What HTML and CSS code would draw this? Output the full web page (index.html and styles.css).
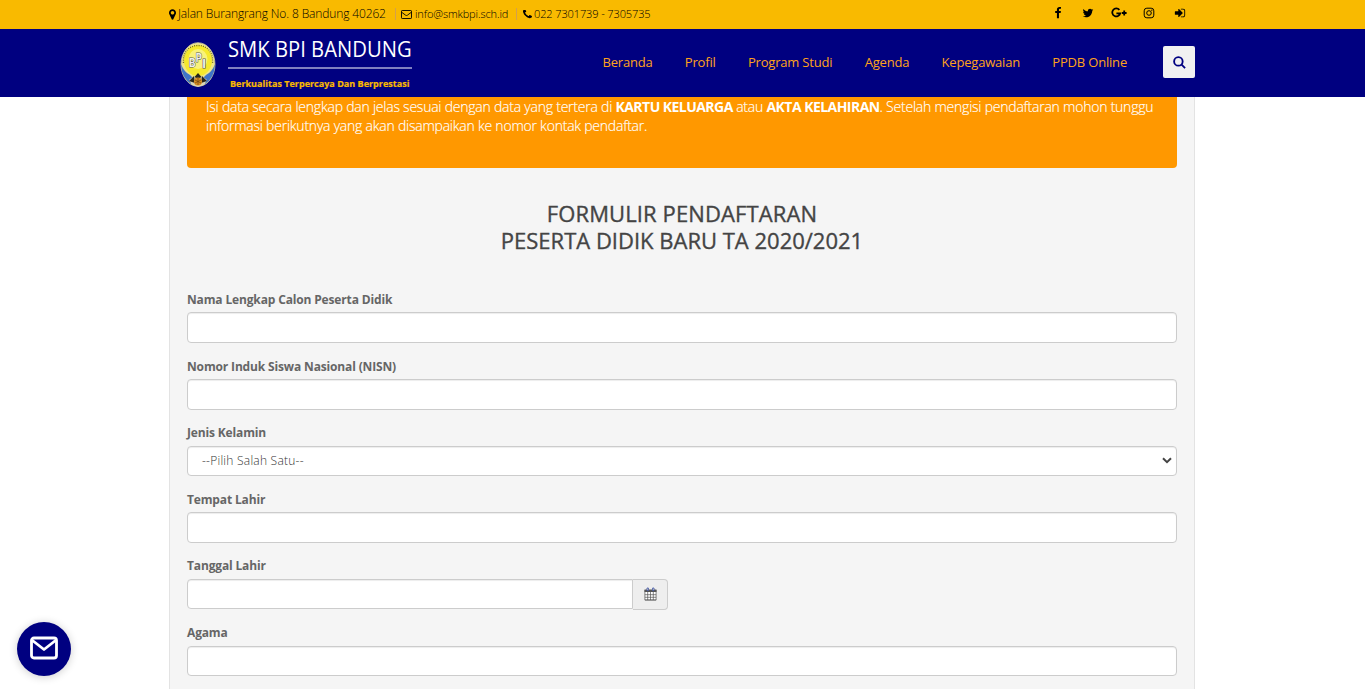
FILE: index.html
```html
<!DOCTYPE html>
<html lang="id">
<head>
<meta charset="utf-8">
<title>SMK BPI Bandung</title>
<link rel="stylesheet" href="styles.css">
</head>
<body>
<div class="topbar">
  <div class="container topbar-in">
    <svg class="ic ic-pin" viewBox="384 128 1024 1536"><path d="M1152 640q0-106-75-181t-181-75-181 75-75 181 75 181 181 75 181-75 75-181zm256 0q0 109-33 179l-364 774q-16 33-47.5 52t-67.5 19-67.5-19-46.5-52l-365-774q-33-70-33-179 0-212 150-362t362-150 362 150 150 362z"/></svg>
    <span class="t-address">Jalan Burangrang No. 8 Bandung 40262</span>
    <i class="sep sep-a"></i>
    <svg class="ic ic-mail" viewBox="0 0 11 9"><path fill="none" stroke="#000" stroke-width=".9" d="M1.2.5h8.6q.7 0 .7.7v6.6q0 .7-.7.7H1.2q-.7 0-.7-.7V1.2q0-.7.7-.7zM.6 2.2l4 3q.9.6 1.8 0l4-3"/></svg>
    <span class="t-email">info@smkbpi.sch.id</span>
    <i class="sep sep-b"></i>
    <svg class="ic ic-phone" viewBox="192 256 1408 1408"><path d="M1600 1240q0 27-10 70.5t-21 68.5q-21 50-122 106-94 51-186 51-27 0-53-3.5t-57.5-12.5-47-14.5-55.5-20.5-49-18q-98-35-175-83-127-79-264-216t-216-264q-48-77-83-175-3-9-18-49t-20.5-55.5-14.5-47-12.5-57.5-3.5-53q0-92 51-186 56-101 106-122 25-11 68.5-21t70.5-10q14 0 21 3 18 6 53 76 11 19 30 54t35 63.5 31 53.5q3 4 17.5 25t21.5 35.5 7 28.5q0 20-28.5 50t-62 55-62 53-28.5 46q0 9 5 22.5t8.5 20.5 14 24 11.5 19q76 137 174 235t235 174q2 1 19 11.5t24 14 20.5 8.5 22.5 5q18 0 46-28.5t53-62 55-62 50-28.5q14 0 28.5 7t35.5 21.5 25 17.5q25 15 53.5 31t63.5 35 54 30q70 35 76 53 3 7 3 21z"/></svg>
    <span class="t-phone">022 7301739 - 7305735</span>
    <div class="social">
      <svg class="so so-fb" viewBox="0 0 1792 1792"><path d="M1343 12v264h-157q-86 0-116 36t-30 108v189h293l-39 296h-254v759h-306v-759h-255v-296h255v-218q0-186 104-288.5t277-102.5q147 0 228 12z"/></svg>
      <svg class="so" viewBox="0 0 1792 1792"><path d="M1684 408q-67 98-162 167 1 14 1 42 0 130-38 259.5t-115.5 248.5-184.5 210.5-258 146-323 54.5q-271 0-496-145 35 4 78 4 225 0 401-138-105-2-188-64.5t-114-159.5q33 5 61 5 43 0 85-11-112-23-185.5-111.5t-73.5-205.5v-4q68 38 146 41-66-44-105-115t-39-154q0-88 44-163 121 149 294.5 238.5t371.5 99.5q-8-38-8-74 0-134 94.5-228.5t228.5-94.5q140 0 236 102 109-21 205-78-37 115-142 178 93-10 186-50z"/></svg>
      <svg class="so so-google" viewBox="0 0 16 12"><path fill="none" stroke="#000" stroke-width="1.8" d="M8.4 2.9A4 4 0 1 0 9.2 6.3H5.4M10.8 6h4.8M13.2 3.6v4.8"/></svg>
      <svg class="so" viewBox="0 0 12 12"><g fill="none" stroke="#000"><rect x="1.2" y="1.2" width="9.6" height="9.6" rx="2.6"/><circle cx="6" cy="6" r="2.3"/></g><circle cx="8.8" cy="3.2" r=".65"/></svg>
      <svg class="so" viewBox="0 0 1792 1792"><path d="M1312 896q0 26-19 45l-544 544q-19 19-45 19t-45-19-19-45v-288h-448q-26 0-45-19t-19-45v-384q0-26 19-45t45-19h448v-288q0-26 19-45t45-19 45 19l544 544q19 19 19 45zm352-352v704q0 119-84.5 203.5t-203.5 84.5h-320q-13 0-22.5-9.5t-9.5-22.5q0-4-1-20t-.5-26.5 3-23.5 10-19.5 20.5-6.5h320q66 0 113-47t47-113v-704q0-66-47-113t-113-47h-312l-11.5-1-11.5-3-8-5.5-7-9-2-13.5q0-4-1-20t-.5-26.5 3-23.5 10-19.5 20.5-6.5h320q119 0 203.5 84.5t84.5 203.5z"/></svg>
    </div>
  </div>
</div>
<header class="header">
  <div class="container header-in">
    <svg class="crest" viewBox="0 0 36 46">
      <ellipse cx="18" cy="22.5" rx="17" ry="21.800" fill="#efe58a" stroke="#c9c5a0" stroke-width=".8"/>
      <path fill="#3f74c8" d="M1 22q3 8 9 11l4 4-3 5Q1.500 36 1 22zM35 22q-3 8-9 11l-4 4 3 5q9.500-6 10-20z"/>
      <ellipse cx="18" cy="18.500" rx="14" ry="15.500" fill="#f6e92c"/>
      <ellipse cx="18" cy="17" rx="9.500" ry="10" fill="#f9f27a"/>
      <path fill="none" stroke="#716d22" stroke-width="1.300" stroke-dasharray="1 1.200" d="M3.500 21C2.500 10 9 3.500 18 3.500S33.500 10 32.500 21"/>
      <path fill="#d9d6b8" d="M9 38l5-4 4 3 4-3 5 4-3 5-6 2-6-2z"/>
      <path fill="#27251c" d="M14 34l-5 5 6 2zM22 34l5 5-6 2zM14.500 35L18 31l3.500 4-3.500 2z"/>
      <circle cx="18" cy="39.500" r="4" fill="#d68d24"/>
      <path fill="none" stroke="#70430f" stroke-width=".7" d="M15 38l6 3M18 36v7M21 38l-6 3"/>
      <g class="crest-text"><text x="9" y="24.500" textLength="6.500" lengthAdjust="spacingAndGlyphs">B</text><text x="15.800" y="20" textLength="6" lengthAdjust="spacingAndGlyphs">P</text><text x="22.200" y="25.500">I</text></g>
    </svg>
    <div class="brand">
      <div class="brand-name"><span class="t-brand">SMK BPI BANDUNG</span></div>
      <div class="brand-tag"><span class="t-tag">Berkualitas Terpercaya Dan Berprestasi</span></div>
    </div>
    <nav class="nav">
      <a>Beranda</a><a>Profil</a><a>Program Studi</a><a>Agenda</a><a>Kepegawaian</a><a>PPDB Online</a>
    </nav>
    <button class="search" aria-label="Cari"><svg viewBox="0 0 14 14"><circle cx="5.800" cy="5.800" r="4.600"/><path d="M9 9l4 4"/></svg></button>
  </div>
</header>
<main class="panel">
  <div class="alert"><div class="a1">Isi data secara lengkap dan jelas sesuai dengan data yang tertera di <b>KARTU KELUARGA</b> atau <b>AKTA KELAHIRAN</b>. Setelah mengisi pendaftaran mohon tunggu</div><div class="a2">informasi berikutnya yang akan disampaikan ke nomor kontak pendaftar.</div></div>
  <h1 class="title">FORMULIR PENDAFTARAN<br>PESERTA DIDIK BARU TA 2020/2021</h1>
  <form class="form">
    <div class="field"><label>Nama Lengkap Calon Peserta Didik</label><input class="control"></div>
    <div class="field"><label>Nomor Induk Siswa Nasional (NISN)</label><input class="control"></div>
    <div class="field field-tight"><label>Jenis Kelamin</label><div class="control select"><span>--Pilih Salah Satu--</span><svg viewBox="0 0 10 7"><path d="M1 1.200l4 4 4-4"/></svg></div></div>
    <div class="field"><label>Tempat Lahir</label><input class="control"></div>
    <div class="field field-tight"><label>Tanggal Lahir</label><div class="group"><input class="control"><span class="addon"><svg viewBox="0 0 13 14"><path fill="#fff" d="M1 4h11v9H1z"/><path fill="#555" d="M.5 2.500h12v2.500H.5z"/><path fill="none" stroke="#555" stroke-width=".7" d="M.9 3v10h11.200V3M.9 13h11.200M.9 7.700h11.200M.9 10.300h11.200M3.700 5v8M6.500 5v8M9.300 5v8"/><path fill="#eee" stroke="#3c50a0" stroke-width=".8" d="M3 1h1.400v2.600H3zM8.600 1H10v2.600H8.600z"/></svg></span></div></div>
    <div class="field field-tight"><label>Agama</label><input class="control"></div>
  </form>
</main>
<a class="chat" aria-label="Kirim pesan"><svg viewBox="0 0 28 24"><rect x="1.500" y="2" width="25" height="20" rx="2.500"/><path d="M2.500 4.500L14 13.500l11.500-9"/></svg></a>
</body>
</html>
```
FILE: styles.css
```css
* { box-sizing: border-box; }
body { margin: 0; height: 689px; overflow: hidden; background: #fff; color: #666; font-family: "Open Sans", sans-serif; font-size: 12px; }
svg { display: block; flex: none; }
.container { width: 1026px; margin-left: 169px; display: flex; }
.topbar { height: 29px; background: #f9ba00; color: #000; font-weight: 300; line-height: 28px; white-space: nowrap; }
.topbar-in { align-items: center; height: 28px; }
.ic-pin { width: 7px; height: 11px; margin-right: 2px; }
.ic-mail { width: 11px; height: 9px; margin: 1px 3px 0 0; }
.ic-phone { width: 9px; height: 9px; margin-right: 2px; }
.t-address { width: 208px; letter-spacing: -.13px; }
.t-email { width: 94px; font-size: 11px; letter-spacing: -.12px; }
.t-phone { font-size: 11px; letter-spacing: -.11px; }
.sep { width: 1px; height: 12px; background: #d4a04c; }
.sep-a { margin: 0 5px 0 9px; }
.sep-b { margin: 0 6px 0 7px; }
.social { display: flex; gap: 18.700px; margin: -3px 9px 0 auto; }
.so { width: 12px; height: 12px; }
.so-fb { margin: 0 -1px 0 1px; }
.so-google { width: 16px; margin: 0 -2px; }
.header { height: 68px; background: #000080; }
.header-in { height: 68px; }
.crest { width: 36px; height: 46px; margin: 13px 0 0 11px; }
.crest-text { font: bold 13px "Liberation Sans", sans-serif; fill: #eee; stroke: #555; stroke-width: 1.200px; paint-order: stroke; }
.brand { width: 184px; margin: 7px 0 0 12px; white-space: nowrap; }
.brand-name { height: 33px; border-bottom: 2px solid #8080c0; color: #fff; font-size: 22px; line-height: 25px; }
.t-brand { display: inline-block; transform: scaleX(.92); transform-origin: 0 0; }
.brand-tag { padding-left: 2px; color: #f9ba00; font-size: 9px; font-weight: 700; line-height: 30px; letter-spacing: .02px; -webkit-text-stroke: .2px #f9ba00; }
.nav { display: flex; gap: 32.300px; margin-left: auto; color: #ffa31a; font-size: 13px; line-height: 66px; letter-spacing: -.19px; white-space: nowrap; }
.search { display: flex; align-items: center; justify-content: center; width: 32px; height: 32px; margin: 17px 0 0 36px; padding: 0; border: 0; border-radius: 2px; background: #f1f1f1; }
.search svg { width: 13px; height: 13px; fill: none; stroke: #000080; stroke-width: 2; }
.panel { width: 1026px; height: 592px; margin-left: 169px; padding: 0 17px; border: solid #e3e3e3; border-width: 0 1px; background: #f5f5f5; overflow: hidden; }
.alert { height: 71px; padding: 0 19px; border-radius: 0 0 4px 4px; background: #ff9800; color: #fff; font-size: 14px; font-weight: 300; line-height: 19px; letter-spacing: -.23px; white-space: nowrap; -webkit-text-stroke: .15px #fff; }
.alert b { font-weight: 700; letter-spacing: -.54px; -webkit-text-stroke: 0; }
.title { margin: 32px 0 0; color: #444; font-size: 22px; font-weight: 500; line-height: 27px; text-align: center; -webkit-text-stroke: .35px #444; }
.title::first-line { letter-spacing: .12px; }
.form { display: grid; grid-auto-rows: 66.700px; margin-top: 37.200px; }
.field label { display: block; height: 21px; font-weight: 700; line-height: 18px; letter-spacing: -.15px; }
.field-tight label { line-height: 16px; }
.control { display: block; width: 100%; height: 31px; padding: 0 14px; border: 1px solid #ccc; border-radius: 4px; background: #fff; box-shadow: inset 0 1px 1px rgba(0,0,0,.075); }
.field-tight .control { height: 30px; }
.select { display: flex; justify-content: space-between; align-items: center; padding-right: 4px; color: #333; font-weight: 300; letter-spacing: .24px; line-height: 16px; }
.select svg { width: 10px; height: 7px; fill: none; stroke: #444; stroke-width: 2; }
.group { display: flex; width: 481px; }
.group .control { width: 446px; border-radius: 4px 0 0 4px; }
.addon { display: flex; align-items: center; justify-content: center; width: 35px; height: 31px; border: 1px solid #ccc; border-left: 0; border-radius: 0 4px 4px 0; background: #eee; }
.addon svg { width: 13px; height: 14px; margin-top: -1px; }
.chat { position: fixed; left: 17px; top: 622px; display: flex; align-items: center; justify-content: center; width: 54px; height: 54px; border-radius: 50%; background: #000080; box-shadow: 0 1px 8px rgba(0,0,0,.2); }
.chat svg { width: 28px; height: 24px; margin-top: -3px; fill: none; stroke: #fff; stroke-width: 2.800; stroke-linejoin: round; }
```
